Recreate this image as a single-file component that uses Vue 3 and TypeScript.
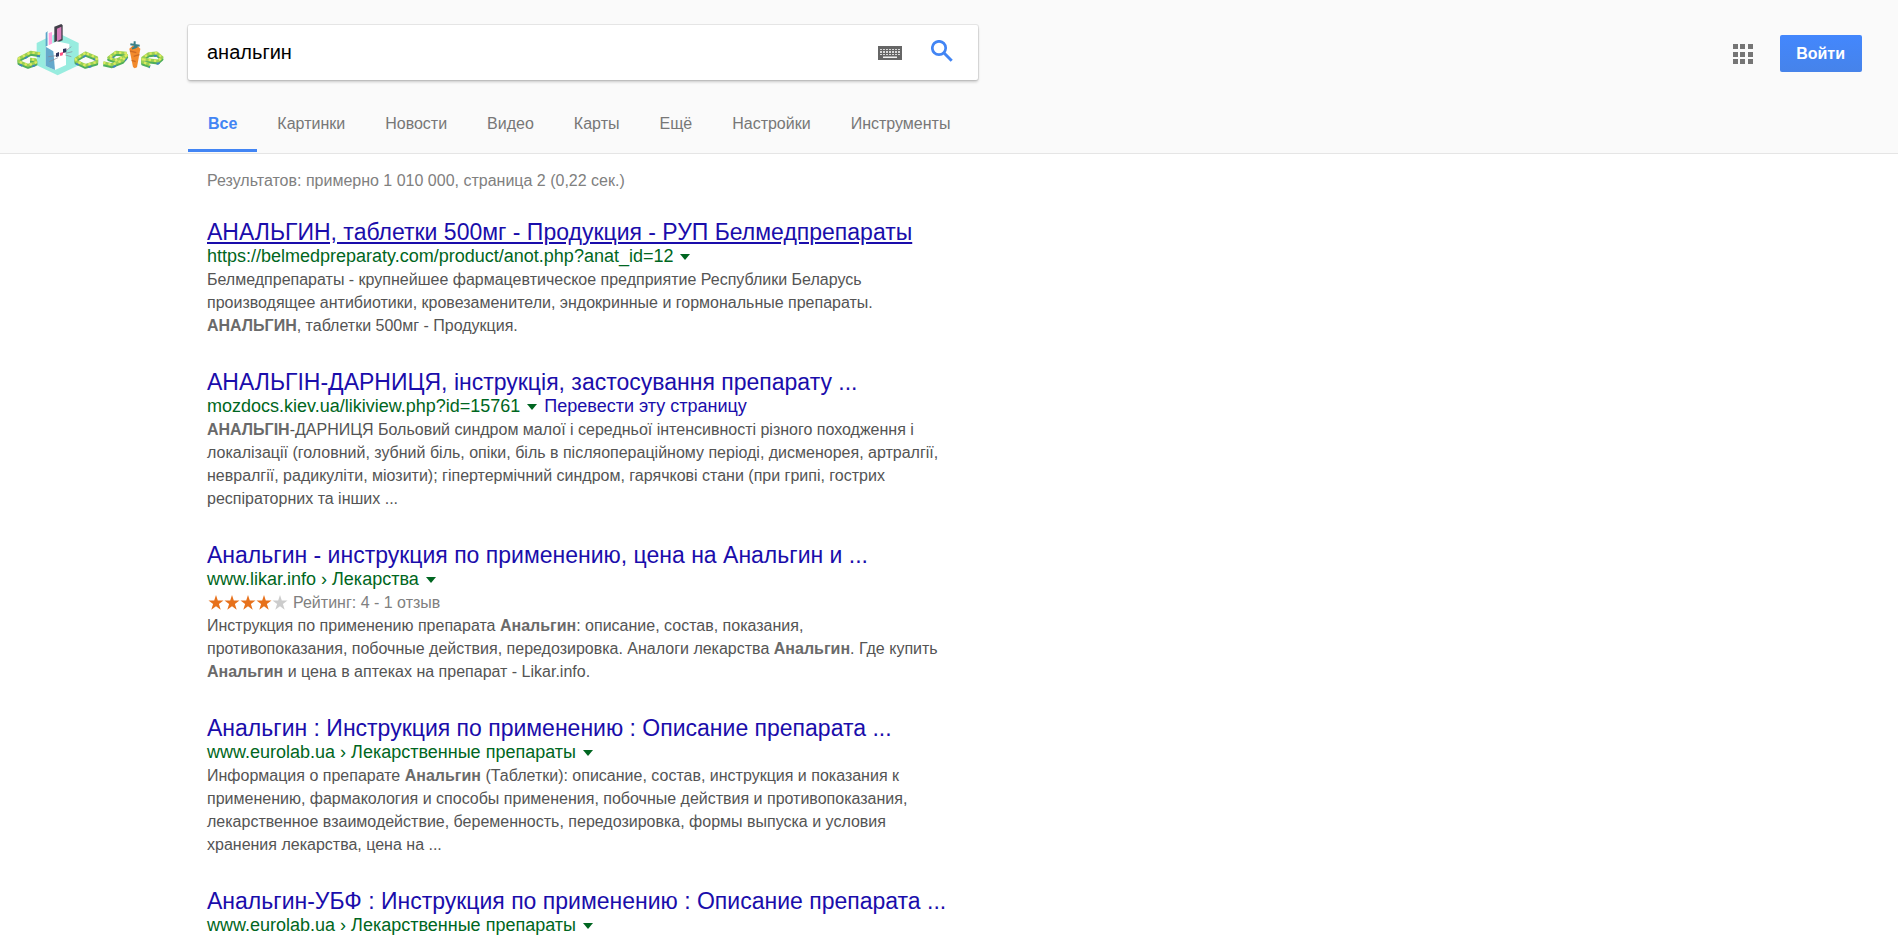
<script setup lang="ts">
interface Part { t: string; b?: boolean }
interface Result {
  title: string
  url: string
  focused?: boolean
  translate?: boolean
  rating?: string
  lines: Part[][]
}

const tabs: string[] = ['Все', 'Картинки', 'Новости', 'Видео', 'Карты', 'Ещё', 'Настройки', 'Инструменты']

const results: Result[] = [
  {
    title: 'АНАЛЬГИН, таблетки 500мг - Продукция - РУП Белмедпрепараты',
    url: 'https://belmedpreparaty.com/product/anot.php?anat_id=12',
    focused: true,
    lines: [
      [{ t: 'Белмедпрепараты - крупнейшее фармацевтическое предприятие Республики Беларусь' }],
      [{ t: 'производящее антибиотики, кровезаменители, эндокринные и гормональные препараты.' }],
      [{ t: 'АНАЛЬГИН', b: true }, { t: ', таблетки 500мг - Продукция.' }],
    ],
  },
  {
    title: 'АНАЛЬГІН-ДАРНИЦЯ, інструкція, застосування препарату ...',
    url: 'mozdocs.kiev.ua/likiview.php?id=15761',
    translate: true,
    lines: [
      [{ t: 'АНАЛЬГІН', b: true }, { t: '-ДАРНИЦЯ Больовий синдром малої і середньої інтенсивності різного походження і' }],
      [{ t: 'локалізації (головний, зубний біль, опіки, біль в післяопераційному періоді, дисменорея, артралгії,' }],
      [{ t: 'невралгії, радикуліти, міозити); гіпертермічний синдром, гарячкові стани (при грипі, гострих' }],
      [{ t: 'респіраторних та інших ...' }],
    ],
  },
  {
    title: 'Анальгин - инструкция по применению, цена на Анальгин и ...',
    url: 'www.likar.info › Лекарства',
    rating: 'Рейтинг: 4 - 1 отзыв',
    lines: [
      [{ t: 'Инструкция по применению препарата ' }, { t: 'Анальгин', b: true }, { t: ': описание, состав, показания,' }],
      [{ t: 'противопоказания, побочные действия, передозировка. Аналоги лекарства ' }, { t: 'Анальгин', b: true }, { t: '. Где купить' }],
      [{ t: 'Анальгин', b: true }, { t: ' и цена в аптеках на препарат - Likar.info.' }],
    ],
  },
  {
    title: 'Анальгин : Инструкция по применению : Описание препарата ...',
    url: 'www.eurolab.ua › Лекарственные препараты',
    lines: [
      [{ t: 'Информация о препарате ' }, { t: 'Анальгин', b: true }, { t: ' (Таблетки): описание, состав, инструкция и показания к' }],
      [{ t: 'применению, фармакология и способы применения, побочные действия и противопоказания,' }],
      [{ t: 'лекарственное взаимодействие, беременность, передозировка, формы выпуска и условия' }],
      [{ t: 'хранения лекарства, цена на ...' }],
    ],
  },
  {
    title: 'Анальгин-УБФ : Инструкция по применению : Описание препарата ...',
    url: 'www.eurolab.ua › Лекарственные препараты',
    lines: [],
  },
]

const keyCols: number[] = [3, 6, 9, 12, 15, 18, 21]
const vines: string[] = [
  'M120 131L92 127L57 145L57 155L84 166L108 157L106 149L90 148',
  'M256 129L228 146L228 153L256 166L290 156L290 143L256 129Z',
  'M380 130L348 127L326 143L348 151L380 136L368 151L336 164L310 158',
  'M430 148L474 153L486 142L470 129L446 131L428 144L428 156L450 164',
]
</script>

<template>
  <div class="page">
    <header class="head">
      <div class="bar">
        <a class="logo" href="#" aria-label="Google">
          <svg viewBox="45 36 450 165" width="150" height="55" aria-hidden="true">
            <path d="M110 99L173 68L236 99V166L173 196L110 166Z" fill="#98ecdf" />
            <g fill="none" stroke-linejoin="round">
              <g v-for="(v, i) in vines" :key="i">
                <path :d="v" stroke="#4fae5c" stroke-width="9" transform="translate(0 6)" />
                <path :d="v" stroke="#3f86bb" stroke-width="8" stroke-dasharray="9 31" transform="translate(0 7)" />
                <path :d="v" stroke="#9bd052" stroke-width="9" />
                <path :d="v" stroke="#dcea62" stroke-width="7" stroke-dasharray="7 9" />
              </g>
            </g>
            <path d="M137 68L143 64V108L137 110Z" fill="#5aa4c8" />
            <path d="M143 67L157 64V106L143 110Z" fill="#fff" />
            <path d="M146 69L156 66V104L146 107Z" fill="#ffa5df" />
            <path d="M163 50L184 42L188 46V91L168 100L163 97Z" fill="#42404a" />
            <path d="M171 56L184 50V87L171 94Z" fill="#d97fbd" />
            <path d="M137 110L170 94L208 102V116L198 122V165L165 180L137 168Z" fill="#fff" />
            <path d="M137 110L160 124L165 180L137 168Z" fill="#65a9cc" />
            <g stroke="#858494" stroke-width="2">
              <path d="M145 140L170 137M148 155L174 143M196 123L214 110M197 130L217 125M196 135L214 140" />
            </g>
            <path d="M168 130L177 126V139L168 141ZM189 117L199 115V127L189 129Z" fill="#30365d" />
            <path d="M179 129L190 126L188 136L181 138Z" fill="#ff4e81" />
            <path d="M388 116L398 107H412L421 116L411 172L404 175L399 171Z" fill="#f28a2c" />
            <path d="M390 123L409 128M401 139L418 134M395 151L407 155" stroke="#cf6b22" stroke-width="4" />
            <path d="M391 103L419 107M404 94V116M396 116L412 110" stroke="#397f86" stroke-width="6" />
          </svg>
        </a>
        <form class="search" @submit.prevent>
          <input class="query" type="text" value="анальгин" aria-label="Поиск" />
          <button class="icon" type="button" aria-label="Экранная клавиатура">
            <svg width="24" height="14" viewBox="0 0 24 14">
              <path d="M0 0H24V14H0Z" fill="#666" />
              <g fill="#d8d8d8">
                <path v-for="x in keyCols" :key="x" :d="`M${x - 1} 3h2v1h-2zM${x - 1} 5h2v2h-2zM${x - 1} 8h2v1h-2z`" />
                <path d="M5 10.500H19V12H5Z" fill="#f0f0f0" />
              </g>
            </svg>
          </button>
          <button class="icon find" type="submit" aria-label="Найти">
            <svg width="22" height="22" viewBox="0 0 22 22" fill="none" stroke="#4285f4">
              <circle cx="8" cy="8" r="6.700" stroke-width="2.700" />
              <path d="M12.800 12.800L20.700 20.700" stroke-width="3" />
            </svg>
          </button>
        </form>
        <div class="account">
          <button class="icon" type="button" aria-label="Приложения Google">
            <svg width="20" height="20" viewBox="0 0 20 20" fill="#757575">
              <path d="M0 0h5v5h-5zM7 0h5v5h-5zM15 0h5v5h-5zM0 8h5v5h-5zM7 8h5v5h-5zM15 8h5v5h-5zM0 15h5v5h-5zM7 15h5v5h-5zM15 15h5v5h-5z" />
            </svg>
          </button>
          <a class="signin" href="#">Войти</a>
        </div>
      </div>
      <nav class="tabs">
        <a v-for="(tab, i) in tabs" :key="tab" href="#" class="tab" :class="{ active: i === 0 }">{{ tab }}</a>
      </nav>
    </header>
    <main class="main">
      <p class="stats">Результатов: примерно 1 010 000, страница 2 (0,22 сек.)</p>
      <article v-for="r in results" :key="r.title" class="result">
        <h3 class="title"><a href="#" :class="{ focused: r.focused }">{{ r.title }}</a></h3>
        <div class="source">
          <cite>{{ r.url }}</cite>
          <button class="caret" type="button" aria-label="Ещё действия">
            <svg width="10" height="6" viewBox="0 0 10 6"><path d="M0 0H10L5 6Z" fill="#006621" /></svg>
          </button>
          <a v-if="r.translate" href="#">Перевести эту страницу</a>
        </div>
        <div v-if="r.rating" class="rating">
          <svg width="82" height="16" viewBox="0 0 82 16" role="img" aria-label="4 из 5">
            <path
              v-for="n in 5"
              :key="n"
              d="M9 0L10.800 5.600H16.500L11.900 8.900L13.700 14.800L9 11.200L4.300 14.800L6.100 8.900L1.500 5.600H7.200Z"
              :transform="`translate(${(n - 1) * 16} 0)`"
              :fill="n < 5 ? '#e7711b' : '#cccccc'"
            />
          </svg>
          <span>{{ r.rating }}</span>
        </div>
        <p class="snippet">
          <template v-for="(line, i) in r.lines" :key="i">
            <br v-if="i > 0" /><template v-for="(p, j) in line" :key="j"><b v-if="p.b">{{ p.t }}</b><template v-else>{{ p.t }}</template></template>
          </template>
        </p>
      </article>
    </main>
  </div>
</template>

<style>
html,
body {
  margin: 0;
  background: #fff;
}
body {
  overflow: hidden;
}
</style>

<style scoped>
.page {
  height: 100vh;
  overflow: hidden;
  font-family: "Liberation Sans", Arial, sans-serif;
  font-size: 16px;
  color: #545454;
}
a {
  color: #1a0dab;
  text-decoration: none;
}
button {
  border: 0;
  padding: 0;
  background: none;
  cursor: pointer;
}
svg {
  display: block;
}
.head {
  background: #fafafa;
  border-bottom: 1px solid #e5e5e5;
}
.bar {
  display: flex;
  align-items: flex-end;
  padding: 22px 36px 0 15px;
}
.logo {
  width: 173px;
  height: 58px;
}
.search {
  display: flex;
  align-items: center;
  box-sizing: border-box;
  width: 790px;
  height: 55px;
  padding: 0 25px 0 19px;
  background: #fff;
  border-radius: 2px;
  box-shadow: 0 2px 3px rgba(0, 0, 0, 0.2), 0 0 0 1px rgba(0, 0, 0, 0.08);
}
.query {
  flex: 1;
  min-width: 0;
  border: 0;
  padding: 0;
  outline: 0;
  background: none;
  font: 20px "Liberation Sans", Arial, sans-serif;
  color: #000;
}
.find {
  margin: 0 0 4px 29px;
}
.account {
  display: flex;
  align-items: center;
  gap: 27px;
  margin: 0 0 8px auto;
}
.signin {
  padding: 0 17px 0 16px;
  border-radius: 2px;
  background: linear-gradient(#4387fd, #4683ea);
  color: #fff;
  font-weight: bold;
  line-height: 37px;
}
.tabs {
  display: flex;
  padding-left: 188px;
}
.tab {
  padding: 29px 20px 10px;
  border-bottom: 3px solid transparent;
  margin-bottom: 1px;
  line-height: 30px;
  color: #777;
}
.active {
  color: #4285f4;
  font-weight: bold;
  border-color: #4285f4;
}
.main {
  padding-left: 207px;
}
.stats {
  margin: 0 0 25px;
  padding-top: 14px;
  line-height: 26px;
  color: #808080;
}
.result {
  margin-bottom: 32px;
}
.title {
  margin: 0;
  font-size: 23px;
  font-weight: normal;
  line-height: 26px;
}
.focused {
  text-decoration: underline;
}
.source {
  display: flex;
  align-items: center;
  gap: 7px;
  font-size: 18px;
  line-height: 23px;
}
cite {
  color: #006621;
  font-style: normal;
}
.rating {
  display: flex;
  align-items: center;
  gap: 4px;
  line-height: 23px;
  color: #808080;
}
.snippet {
  margin: 0;
  line-height: 23px;
}
b {
  color: #6a6a6a;
}
</style>
